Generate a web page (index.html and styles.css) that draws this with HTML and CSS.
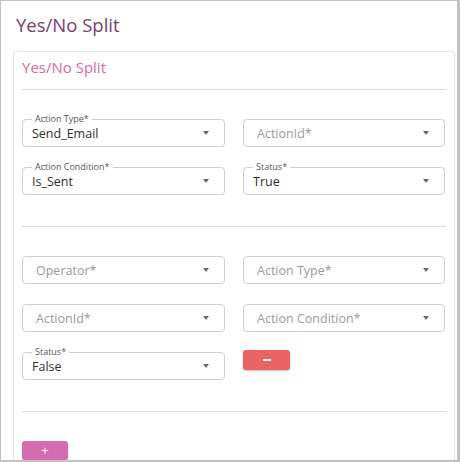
FILE: index.html
```html
<!DOCTYPE html>
<html>
<head>
<meta charset="utf-8">
<link rel="stylesheet" href="styles.css">
</head>
<body>
<div class="frame">
  <h1 class="page-title">Yes/No Split</h1>
  <div class="card">
    <div class="card-header">Yes/No Split</div>
    <div class="section">
      <div class="grid">
        <div class="field"><span class="label">Action Type*</span><span class="value">Send_Email</span><span class="arrow"></span></div>
        <div class="field"><span class="placeholder">ActionId*</span><span class="arrow"></span></div>
        <div class="field"><span class="label">Action Condition*</span><span class="value">Is_Sent</span><span class="arrow"></span></div>
        <div class="field"><span class="label">Status*</span><span class="value">True</span><span class="arrow"></span></div>
      </div>
    </div>
    <div class="section">
      <div class="grid">
        <div class="field"><span class="placeholder">Operator*</span><span class="arrow"></span></div>
        <div class="field"><span class="placeholder">Action Type*</span><span class="arrow"></span></div>
        <div class="field"><span class="placeholder">ActionId*</span><span class="arrow"></span></div>
        <div class="field"><span class="placeholder">Action Condition*</span><span class="arrow"></span></div>
        <div class="field"><span class="label">Status*</span><span class="value">False</span><span class="arrow"></span></div>
        <div class="cell"><button class="btn btn-remove" aria-label="remove"><span class="minus"></span></button></div>
      </div>
    </div>
    <div class="footer">
      <button class="btn btn-add">+</button>
    </div>
  </div>
</div>
</body>
</html>
```
FILE: styles.css
```css
html, body {
  margin: 0;
  padding: 0;
  background: #ffffff;
}
body {
  font-family: "Open Sans", "Noto Sans", sans-serif;
}
.frame {
  width: 460px;
  height: 462px;
  box-sizing: border-box;
  border-style: solid;
  border-color: #c2c2c2;
  border-width: 1px 3px 2px 1px;
  overflow: hidden;
  background: #fff;
}
.page-title {
  margin: 0;
  padding: 11px 0 0 15px;
  font-size: 18.5px;
  line-height: 26px;
  font-weight: 400;
  color: #7a3d70;
}
.card {
  margin: 13px 2px 0 12px;
  border: 1px solid #e4e4e4;
  border-radius: 4px;
  padding: 0 8px;
  box-shadow: 0 0 2px rgba(0,0,0,0.05);
}
.card-header {
  padding: 5px 0 12px;
  font-size: 15px;
  line-height: 20px;
  color: #d36aab;
  border-bottom: 1px solid #dcdcdc;
}
.section {
  padding: 29px 0 31px;
  border-bottom: 1px solid #dcdcdc;
}
.grid {
  display: grid;
  grid-template-columns: 203px 202px;
  column-gap: 18px;
  row-gap: 20px;
}
.field {
  position: relative;
  height: 28px;
  box-sizing: border-box;
  border: 1px solid #cfcfcf;
  border-radius: 4px;
  display: flex;
  align-items: center;
  padding: 0 10px 0 9px;
}
.label {
  position: absolute;
  top: -6px;
  left: 9px;
  padding: 0 3px;
  background: #fff;
  font-size: 9px;
  line-height: 10px;
  color: #555;
}
.value {
  font-size: 12.5px;
  color: #2e2e2e;
  flex: 1;
}
.placeholder {
  font-size: 12.5px;
  color: #9a9a9a;
  padding-left: 4px;
  flex: 1;
}
.arrow {
  width: 0;
  height: 0;
  border-left: 3.5px solid transparent;
  border-right: 3.5px solid transparent;
  border-top: 4px solid #6a6a6a;
  margin-right: 5px;
}
.cell {
  display: flex;
  align-items: flex-start;
}
.btn {
  border: none;
  border-radius: 3px;
  color: #fff;
  padding: 0;
  display: flex;
  align-items: center;
  justify-content: center;
  font-family: "Open Sans", sans-serif;
  cursor: pointer;
}
.btn-remove {
  width: 47px;
  height: 20px;
  margin-top: -2px;
  background: #e96464;
  box-shadow: 0 1px 2px rgba(0,0,0,0.25);
}
.minus {
  display: block;
  width: 8px;
  height: 2px;
  background: #fff;
}
.footer {
  padding-top: 29px;
  padding-bottom: 10px;
}
.btn-add {
  width: 46px;
  height: 19px;
  background: #d46cb0;
  font-size: 13px;
  line-height: 19px;
  box-shadow: 0 1px 2px rgba(0,0,0,0.2);
}
```
